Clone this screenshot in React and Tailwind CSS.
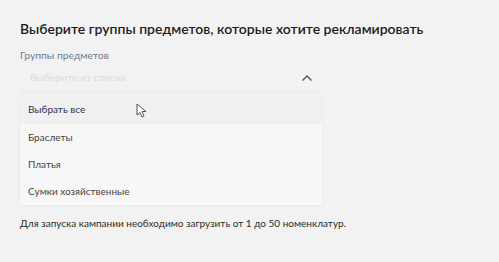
export default function App() {
  const items = ["Выбрать все", "Браслеты", "Платья", "Сумки хозяйственные"];

  return (
    <div
      className="w-[499px] h-[262px] bg-[#f2f2f2] px-5 pt-[20px] overflow-hidden"
      style={{ fontFamily: "Lato, 'Noto Sans', sans-serif" }}
    >
      <h2 className="text-[14px] leading-[18px] font-semibold text-[#1c1c1c]">
        Выберите группы предметов, которые хотите рекламировать
      </h2>

      <div className="mt-[10px] w-[302px]">
        <div className="text-[10.3px] leading-[14px] text-[#6f7c8e]">Группы предметов</div>
        <div className="mt-[2px] h-[28px] border-b border-[#e6e8ef] flex items-center justify-between pl-[10px] pr-[9px]">
          <span className="text-[10.3px] text-[#dcdcdc]">Выберите из списка</span>
          <svg width="12" height="8" viewBox="0 0 12 8" fill="none">
            <path d="M1.5 6.5 L6 2 L10.5 6.5" stroke="#555" strokeWidth="1.4" />
          </svg>
        </div>

        <div className="relative mt-[2px] bg-[#f7f7f7] shadow-[0_1px_4px_rgba(0,0,0,0.04)]">
          {items.map((t, i) => (
            <div
              key={t}
              className={
                "flex items-center pl-[8px] text-[10px] " +
                (i === 0 ? "bg-[#f0f0f1] text-[#2a3550] h-[30px]" : "text-[#444] h-[27px]")
              }
            >
              {t}
            </div>
          ))}
          <svg
            className="absolute left-[116px] top-[9px]"
            width="12"
            height="16"
            viewBox="0 0 12 16"
            fill="none"
          >
            <path d="M1 1 L1 12 L4 9.5 L6 14 L8 13 L6 8.5 L10 8.5 Z" fill="#fff" stroke="#555" strokeWidth="1" />
          </svg>
        </div>
      </div>

      <p className="mt-[11px] text-[10px] text-[#2b2b2b]">
        Для запуска кампании необходимо загрузить от 1 до 50 номенклатур.
      </p>
    </div>
  );
}
